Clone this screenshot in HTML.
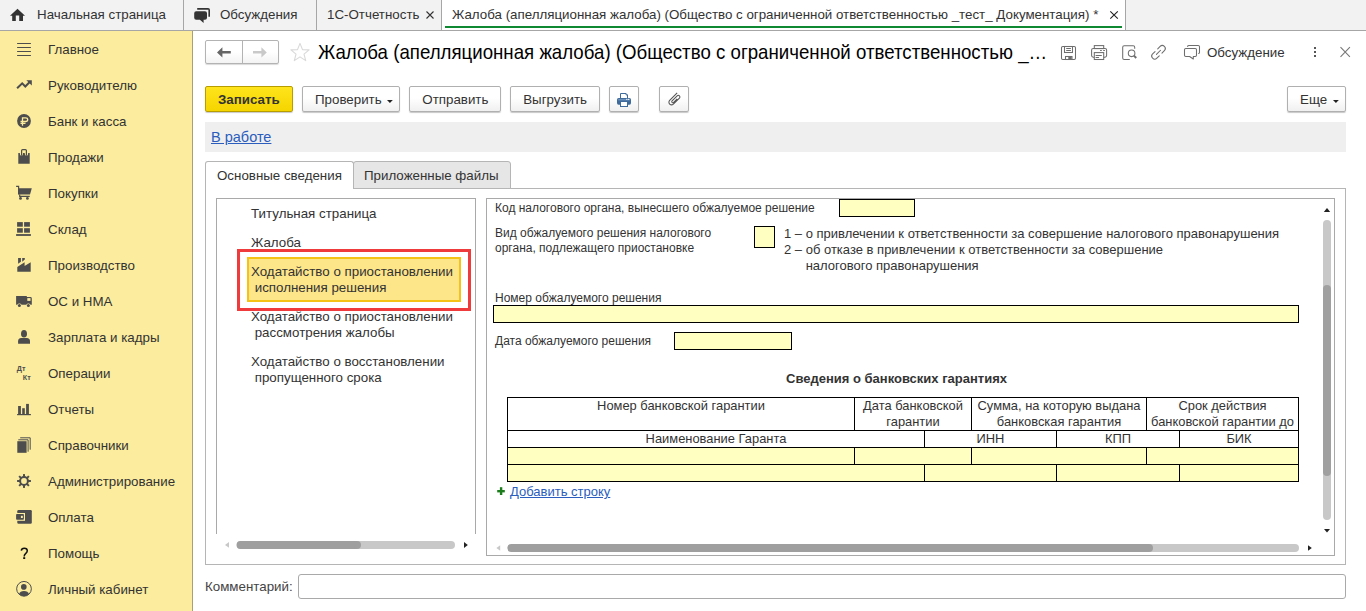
<!DOCTYPE html>
<html><head><meta charset="utf-8">
<style>
*{box-sizing:border-box;margin:0;padding:0}
html,body{width:1366px;height:611px;overflow:hidden;background:#fff;font-family:"Liberation Sans",sans-serif;color:#333;font-size:13px}
.a{position:absolute;white-space:nowrap}
svg{position:absolute;overflow:visible}
#tabs{position:absolute;left:0;top:0;width:1366px;height:31px;background:#f2f2f2;border-bottom:1px solid #a6a6a6}
.sep{position:absolute;top:0;width:1px;height:30px;background:#a6a6a6}
.tt{position:absolute;top:7px;font-size:13.33px;color:#333;line-height:15px;white-space:nowrap}
#side{position:absolute;left:0;top:31px;width:193px;height:580px;background:#fbec9e;border-right:1px solid #a89f72}
.si{position:absolute;left:48px;font-size:13.33px;color:#333;line-height:15px;white-space:nowrap}
.btn{position:absolute;top:86px;height:26px;border:1px solid #b0b0b0;border-radius:2px;background:linear-gradient(#fff 0%,#fff 45%,#f0f0f0 100%);box-shadow:0 1px 1px rgba(0,0,0,.22);font-size:13.33px;line-height:24px;padding-top:1px;color:#333;white-space:nowrap}
.fl{position:absolute;font-size:12px;line-height:15px;color:#333;white-space:nowrap}
.fi{position:absolute;background:#ffffc2;border:1px solid #000}
.lp{position:absolute;left:251px;font-size:13.33px;line-height:16px;color:#333;white-space:nowrap}
.th{position:absolute;font-size:12.9px;line-height:16px;color:#333;text-align:center;white-space:nowrap}
.vl{position:absolute;width:1px;background:#000}
.hl{position:absolute;height:1px;background:#000}
</style></head><body>

<div id="tabs">
  <div class="sep" style="left:183px"></div>
  <div class="sep" style="left:316px"></div>
  <div class="sep" style="left:441px"></div>
  <div style="position:absolute;left:442px;top:0;width:683px;height:30px;background:#fff"></div>
  <div style="position:absolute;left:445px;top:26px;width:677px;height:2px;background:#0f8a33"></div>
  <div class="sep" style="left:1125px"></div>
  <svg style="left:0;top:0" width="40" height="30"><path d="M17.5 8.8 L10 15.8 H12.2 V21 H15.8 V15.6 H19.2 V21 H23 V15.8 H25 Z" fill="#333"/></svg>
  <div class="tt" style="left:37px">Начальная страница</div>
  <svg style="left:188px;top:0" width="30" height="30"><path d="M9.2 8 H20 Q22 8 22 10 V16.7 H20.4 V9.8 H9.2 Z" fill="#333"/><path d="M8.2 11.2 H17 Q19 11.2 19 13.2 V17.8 Q19 19.8 17 19.8 H15.6 V23.1 L11.9 19.8 H8.2 Q6.2 19.8 6.2 17.8 V13.2 Q6.2 11.2 8.2 11.2 Z" fill="#333"/></svg>
  <div class="tt" style="left:220px">Обсуждения</div>
  <div class="tt" style="left:327px">1С-Отчетность</div>
  <svg style="left:425px;top:0" width="14" height="30"><path d="M1.5 11.5 L8.5 18.5 M8.5 11.5 L1.5 18.5" stroke="#333" stroke-width="1.1"/></svg>
  <div class="tt" style="left:452px">Жалоба (апелляционная жалоба) (Общество с ограниченной ответственностью _тест_ Документация) *</div>
  <svg style="left:1106px;top:0" width="14" height="30"><path d="M4.3 11.3 L11.8 18.6 M11.8 11.3 L4.3 18.6" stroke="#222" stroke-width="1.15"/></svg>
</div>

<div id="side">
  <svg style="left:0;top:0" width="192" height="580">
    <g fill="#4d4d4d">
      <rect x="17.1" y="12" width="13.8" height="1"/><rect x="17.1" y="16" width="13.8" height="1"/><rect x="17.1" y="20" width="13.8" height="1"/><rect x="17.1" y="24" width="13.8" height="1"/>
      <path d="M26.4 49.2 H31.8 V54.5 Z"/>
      <circle cx="24" cy="90" r="6.9"/>
      <path d="M18.3 122.1 H19.9 V123 Q19.9 124.8 21.45 124.8 Q23 124.8 23 123 V122.1 H24.8 V123 Q24.8 124.8 26.45 124.8 Q28.1 124.8 28.1 123 V122.1 H29.7 V132.7 H18.3 Z"/>
      <path d="M18.6 157.2 H31.8 L30 163.5 H18.6 Z"/>
      <circle cx="20.5" cy="167.4" r="1.4"/><circle cx="27.4" cy="167.4" r="1.4"/>
      <rect x="17.1" y="191.1" width="5.7" height="4.6"/><rect x="24.1" y="191.1" width="5.8" height="4.6"/><rect x="17.1" y="197.2" width="5.7" height="4.5"/><rect x="24.1" y="197.2" width="5.8" height="4.5"/><rect x="16.1" y="203.1" width="14.8" height="1.8"/>
      <path d="M17.3 236.1 L24.6 231.2 V235.1 L30.7 231.2 V240.7 H17.3 Z M18.1 227.1 H20.9 V230.7 L18.1 232.8 Z M22.2 227.1 H24.8 V228.6 L22.2 230.7 Z"/>
      <path d="M16.1 265.1 H26.8 V266.1 H30.4 Q31.8 266.1 31.8 267.5 V273.7 H30.6 A2.7 2.7 0 0 0 26.2 273.7 H21.6 A2.7 2.7 0 0 0 17.2 273.7 H16.1 Z"/>
      <circle cx="19.4" cy="274.4" r="1.5"/><circle cx="28.4" cy="274.4" r="1.5"/>
      <ellipse cx="24" cy="302.7" rx="3" ry="3.8"/>
      <path d="M18.1 312.7 V310.3 Q18.1 307.3 21.2 307.1 H26.8 Q30 307.3 30 310.3 V312.7 Z"/>
      <rect x="18.1" y="375" width="2.8" height="8.2"/><rect x="22.2" y="377.2" width="2.6" height="6"/><rect x="26.1" y="372.9" width="2.8" height="10.3"/><rect x="17.1" y="383" width="13.8" height="1.2"/>
      <rect x="17.3" y="410.2" width="9.3" height="11.6"/>
      <rect x="17.3" y="479.1" width="14.5" height="13.6" rx="1.2"/>
    </g>
    <path d="M16.1 155.3 H18.6 V163.5 M19.7 163.5 V165.4 H29.7" fill="none" stroke="#4d4d4d" stroke-width="1.2"/>
    <path d="M21.6 124.8 V119.6 Q21.6 118.6 22.6 118.6 H25.4 Q26.4 118.6 26.4 119.6 V124.8" fill="none" stroke="#4d4d4d" stroke-width="1.2"/>
    <path d="M17.1 57.3 L22.2 52.3 L25.3 55.5 L29.7 51" fill="none" stroke="#4d4d4d" stroke-width="2"/>
    <path d="M22.5 94.7 V86.9 H25.6 Q27.7 86.9 27.7 88.7 Q27.7 90.5 25.6 90.5 H20.5 M20.5 92.4 H25.5" fill="none" stroke="#fbec9e" stroke-width="1.3"/>
    <rect x="27.3" y="267.1" width="3.2" height="2.8" fill="#fbec9e"/>
    <path d="M18.3 408.8 H28.1 V420.7 M20.2 406.8 H30.2 V418.7" fill="none" stroke="#4d4d4d" stroke-width="1"/>
    <rect x="15" y="482" width="10" height="7.8" fill="#fbec9e"/>
    <rect x="16.1" y="483" width="7.8" height="5.8" rx="0.8" fill="#4d4d4d"/>
    <rect x="20.9" y="484.8" width="1.9" height="2.2" fill="#fbec9e"/>
    <text x="16.8" y="340" font-family="Liberation Sans" font-size="7.2" font-weight="bold" fill="#4d4d4d">Дт</text>
    <text x="22.8" y="349" font-family="Liberation Sans" font-size="7.2" font-weight="bold" fill="#4d4d4d">Кт</text>
    <g transform="translate(24 450)"><circle r="3.9" fill="none" stroke="#4d4d4d" stroke-width="2"/><g fill="#4d4d4d"><rect x="-1" y="-6.9" width="2" height="13.8"/><rect x="-1" y="-6.9" width="2" height="13.8" transform="rotate(45)"/><rect x="-1" y="-6.9" width="2" height="13.8" transform="rotate(90)"/><rect x="-1" y="-6.9" width="2" height="13.8" transform="rotate(135)"/></g><circle r="2.9" fill="#fbec9e"/></g>
    <path d="M21.3 519.6 Q21.5 517.2 24.3 517.2 Q27.3 517.2 27.3 519.8 Q27.3 521.3 25.6 522.6 Q24.2 523.8 24.2 525.4" fill="none" stroke="#111" stroke-width="1.5"/>
    <rect x="23.2" y="526.2" width="2" height="1.8" fill="#111"/>
    <g transform="translate(24 557.8)"><circle r="7.35" fill="none" stroke="#4d4d4d" stroke-width="1"/><circle cx="-0.2" cy="-1.9" r="2.8" fill="#4d4d4d"/><path d="M-5 5.2 Q-4 2.3 0 2.3 Q4 2.3 5 5.2 Q3 7.4 0 7.4 Q-3 7.4 -5 5.2 Z" fill="#4d4d4d"/></g>
  </svg>
  <div class="si" style="top:11px">Главное</div>
  <div class="si" style="top:47px">Руководителю</div>
  <div class="si" style="top:83px">Банк и касса</div>
  <div class="si" style="top:119px">Продажи</div>
  <div class="si" style="top:155px">Покупки</div>
  <div class="si" style="top:191px">Склад</div>
  <div class="si" style="top:227px">Производство</div>
  <div class="si" style="top:263px">ОС и НМА</div>
  <div class="si" style="top:299px">Зарплата и кадры</div>
  <div class="si" style="top:335px">Операции</div>
  <div class="si" style="top:371px">Отчеты</div>
  <div class="si" style="top:407px">Справочники</div>
  <div class="si" style="top:443px">Администрирование</div>
  <div class="si" style="top:479px">Оплата</div>
  <div class="si" style="top:515px">Помощь</div>
  <div class="si" style="top:551px">Личный кабинет</div>
</div>

<!-- header -->
<div style="position:absolute;left:205px;top:40px;width:74px;height:24px;border:1px solid #b3b3b3;border-radius:2px;background:linear-gradient(#fff 50%,#f3f3f3);box-shadow:0 1px 1px rgba(0,0,0,.15)"></div>
<div style="position:absolute;left:242px;top:41px;width:1px;height:22px;background:#b3b3b3"></div>
<svg style="left:205px;top:40px" width="74" height="24"><path d="M12 12.4 L17.4 7.2 V11.1 H25.8 V13.6 H17.4 V17.6 Z" fill="#666"/><path d="M61.8 12.4 L56.4 7.2 V11.1 H48 V13.6 H56.4 V17.6 Z" fill="#c9c9c9"/></svg>
<svg style="left:290px;top:42px" width="20" height="20"><path d="M10 1.4 L12.5 7.6 L19.1 7.9 L14 12.1 L15.7 18.6 L10 14.9 L4.3 18.6 L6 12.1 L0.9 7.9 L7.5 7.6 Z" fill="none" stroke="#d9d9d9" stroke-width="1.1" stroke-linejoin="round"/></svg>
<div class="a" style="left:318px;top:40.8px;font-size:18.65px;line-height:22px;color:#000;letter-spacing:0.018px;transform:scaleY(1.075);transform-origin:0 0">Жалоба (апелляционная жалоба) (Общество с ограниченной ответственностью _…</div>

<svg style="left:1055px;top:40px" width="300" height="26" fill="none" stroke="#6e6e6e" stroke-width="1.05">
  <rect x="6.5" y="6.5" width="14" height="13" rx="1.3"/>
  <rect x="9.5" y="6.5" width="8" height="6"/>
  <path d="M11.2 8.5 H15.9 M11.2 10.5 H15.9"/>
  <rect x="10.5" y="16.5" width="6.5" height="3"/>
  <rect x="13.3" y="16.5" width="3.4" height="3" fill="#6e6e6e" stroke="none"/>
  <rect x="39.3" y="5.6" width="9.4" height="3"/>
  <rect x="36.6" y="8.4" width="15" height="8.8" rx="1.6"/>
  <rect x="39.3" y="12.6" width="9.4" height="6.9" fill="#fff"/>
  <path d="M41 15.4 H46.4 M41 17.5 H43.6 M45.5 10.5 H46.4 M48.6 10.5 H49.5" stroke-linecap="round"/>
  <path d="M74.8 19.5 H69.2 Q67.7 19.5 67.7 18 V7.3 Q67.7 5.8 69.2 5.8 H78.2 Q79.7 5.8 79.7 7.3 V8.8"/>
  <circle cx="76.6" cy="13.3" r="3.3"/>
  <path d="M78.9 15.6 L81.2 18" stroke-width="2"/>
  <path transform="translate(103.5 12.3) rotate(-45)" d="M1.9 -3 H5.3 A3 3 0 0 1 5.3 3 H1.9 M-1.9 3 H-5.3 A3 3 0 0 1 -5.3 -3 H-1.9 M-2.9 0 H2.9" stroke-linecap="round"/>
  <path d="M130.8 8.5 H140.2 Q141.5 8.5 141.5 9.8 V15.2 Q141.5 16.5 140.2 16.5 H138.3 V19 L134.6 16.5 H130.8 Q129.5 16.5 129.5 15.2 V9.8 Q129.5 8.5 130.8 8.5 Z" stroke-linejoin="round"/>
  <path d="M132.6 6.4 Q132.8 5.5 133.8 5.5 H143.2 Q144.5 5.5 144.5 6.8 V12.4 Q144.5 13.2 143.6 13.4" stroke-linecap="round"/>
  <path d="M285.5 7.2 L294.9 16.8 M294.9 7.2 L285.5 16.8" stroke="#777" stroke-width="1.1"/>
</svg>
<div class="a" style="left:1207px;top:45px;font-size:13.33px;line-height:15px;color:#333">Обсуждение</div>
<svg style="left:1312px;top:44px" width="6" height="16"><rect x="2" y="3" width="2" height="2" fill="#555"/><rect x="2" y="7" width="2" height="2" fill="#555"/><rect x="2" y="11" width="2" height="2" fill="#555"/></svg>

<!-- toolbar -->
<div class="btn" style="left:205px;width:88px;background:linear-gradient(#ffe41c,#f5d500);border-color:#b89d00;font-weight:bold;padding-left:12px">Записать</div>
<div class="btn" style="left:302px;width:98px;padding-left:12px">Проверить</div>
<svg style="left:386px;top:100px" width="8" height="4"><path d="M1 0.1 H6.8 L3.9 3 Z" fill="#222"/></svg>
<div class="btn" style="left:409px;width:92px;padding-left:12.3px">Отправить</div>
<div class="btn" style="left:510px;width:90px;padding-left:12.2px">Выгрузить</div>
<div class="btn" style="left:609px;width:30px"></div>
<svg style="left:609px;top:86px" width="30" height="26"><path d="M11.5 12 V7.5 H17 L18.5 9 V12" fill="#fff" stroke="#3f6b9c" stroke-width="1"/><path d="M17 7.5 V9 H18.5" fill="none" stroke="#3f6b9c" stroke-width="0.8"/><rect x="8" y="12" width="14" height="6.7" rx="1.6" fill="#3f6b9c"/><rect x="9.2" y="13.3" width="11.6" height="1" fill="#7d9fc6"/><rect x="11.5" y="15.5" width="7" height="5" fill="#fff" stroke="#3f6b9c" stroke-width="1"/><rect x="19" y="12.8" width="1.3" height="1" fill="#fff"/><rect x="17.2" y="12.8" width="1.3" height="1" fill="#fff"/></svg>
<div class="btn" style="left:659px;width:30px"></div>
<svg style="left:659px;top:86px" width="30" height="26"><path transform="translate(15.2 13.6) rotate(-45)" d="M6.8 -2.6 H-3.8 A2.6 2.6 0 0 0 -3.8 2.6 H4.8 A1.6 1.6 0 0 0 4.8 -0.6 H-2.4 A1.1 1.1 0 0 0 -2.4 1.6 H2.6" fill="none" stroke="#555" stroke-width="1.05"/></svg>
<div class="btn" style="left:1287px;width:59px;padding-left:12px">Еще</div>
<svg style="left:1332px;top:100px" width="8" height="4"><path d="M1 0.1 H6.8 L3.9 3 Z" fill="#222"/></svg>

<!-- status -->
<div style="position:absolute;left:205px;top:122px;width:1141px;height:30px;background:#efefef"></div>
<div class="a" style="left:211px;top:129px;font-size:14.5px;line-height:17px;color:#2a5dbd;text-decoration:underline">В работе</div>

<!-- page tabs -->
<div style="position:absolute;left:205px;top:188px;width:1141px;height:377px;border:1px solid #b5b5b5"></div>
<div style="position:absolute;left:353px;top:161px;width:158px;height:28px;background:#e6e6e6;border:1px solid #b5b5b5;border-radius:3px 3px 0 0"></div>
<div style="position:absolute;left:205px;top:161px;width:149px;height:28px;background:#fff;border:1px solid #b5b5b5;border-bottom:none;border-radius:3px 3px 0 0"></div>
<div class="a" style="left:217px;top:168px;font-size:13.33px;line-height:15px;color:#333">Основные сведения</div>
<div class="a" style="left:364px;top:168px;font-size:13.33px;line-height:15px;color:#333">Приложенные файлы</div>

<!-- left panel -->
<div style="position:absolute;left:216px;top:198px;width:260px;height:336px;border:1px solid #a9a9a9;border-bottom:none"></div>
<div class="lp" style="top:206px">Титульная страница</div>
<div class="lp" style="top:235px">Жалоба</div>
<div style="position:absolute;left:237px;top:249px;width:234px;height:62px;border:3px solid #ef3b3b"></div>
<div style="position:absolute;left:247px;top:257px;width:214px;height:45px;background:#fde58a;border:2px solid #f5c216"></div>
<div class="lp" style="top:264px">Ходатайство о приостановлении<br>&nbsp;исполнения решения</div>
<div class="lp" style="top:309px">Ходатайство о приостановлении<br>&nbsp;рассмотрения жалобы</div>
<div class="lp" style="top:354px">Ходатайство о восстановлении<br>&nbsp;пропущенного срока</div>
<svg style="left:216px;top:534px" width="260" height="22"><path d="M9 11 L13 8 V13.8 Z" fill="#c8c8c8"/><rect x="20.6" y="7" width="218.4" height="8" rx="4" fill="#c8c8c8"/><rect x="20.6" y="7" width="124.4" height="8" rx="4" fill="#9f9f9f"/><path d="M248 8 L251.8 11 L248 13.9 Z" fill="#222"/></svg>

<!-- right panel -->
<div style="position:absolute;left:486px;top:198px;width:849px;height:358px;border:1px solid #a9a9a9"></div>
<svg style="left:1318px;top:199px" width="16" height="356"><path d="M9 9 L12.2 13 H5.8 Z" fill="#222"/><rect x="5" y="21" width="8" height="300" rx="4" fill="#c8c8c8"/><rect x="5" y="86" width="8" height="191" rx="4" fill="#a0a0a0"/><path d="M6 330 H12 L9 333.6 Z" fill="#222"/></svg>
<svg style="left:487px;top:537px" width="830" height="18"><path d="M9.4 11 L13.2 8.2 V13.8 Z" fill="#c8c8c8"/><rect x="20.5" y="7" width="791.5" height="8" rx="4" fill="#c8c8c8"/><rect x="20.5" y="7" width="645.5" height="8" rx="4" fill="#9f9f9f"/><path d="M821 8.2 L824.8 11 L821 13.8 Z" fill="#222"/></svg>

<div class="fl" style="left:495px;top:201px">Код налогового органа, вынесшего обжалуемое решение</div>
<div class="fi" style="left:839px;top:199px;width:76px;height:18px"></div>
<div class="fl" style="left:495px;top:226px">Вид обжалуемого решения налогового<br>органа, подлежащего приостановке</div>
<div class="fi" style="left:754px;top:226px;width:21px;height:22px"></div>
<div class="a" style="left:784px;top:226px;font-size:13px;line-height:16px;color:#333">1 – о привлечении к ответственности за совершение налогового правонарушения<br>2 – об отказе в привлечении к ответственности за совершение<br>&nbsp; &nbsp; &nbsp; налогового правонарушения</div>
<div class="fl" style="left:495px;top:291px">Номер обжалуемого решения</div>
<div class="fi" style="left:493px;top:305px;width:806px;height:18px"></div>
<div class="fl" style="left:495px;top:334px">Дата обжалуемого решения</div>
<div class="fi" style="left:674px;top:332px;width:118px;height:18px"></div>

<div class="a" style="left:786px;top:371px;font-size:13px;line-height:15px;font-weight:bold;color:#333">Сведения о банковских гарантиях</div>

<!-- table -->
<div style="position:absolute;left:507px;top:448px;width:792px;height:34px;background:#ffffc2"></div>
<div class="hl" style="left:507px;top:397px;width:792px"></div>
<div class="hl" style="left:507px;top:430px;width:792px"></div>
<div class="hl" style="left:507px;top:447px;width:792px"></div>
<div class="hl" style="left:507px;top:464px;width:792px"></div>
<div class="hl" style="left:507px;top:481px;width:792px"></div>
<div class="vl" style="left:507px;top:397px;height:85px"></div>
<div class="vl" style="left:1298px;top:397px;height:85px"></div>
<div class="vl" style="left:854px;top:397px;height:34px"></div>
<div class="vl" style="left:971px;top:397px;height:34px"></div>
<div class="vl" style="left:1146px;top:397px;height:34px"></div>
<div class="vl" style="left:854px;top:447px;height:18px"></div>
<div class="vl" style="left:971px;top:447px;height:18px"></div>
<div class="vl" style="left:1146px;top:447px;height:18px"></div>
<div class="vl" style="left:924px;top:430px;height:18px"></div>
<div class="vl" style="left:1056px;top:430px;height:18px"></div>
<div class="vl" style="left:1179px;top:430px;height:18px"></div>
<div class="vl" style="left:924px;top:464px;height:18px"></div>
<div class="vl" style="left:1056px;top:464px;height:18px"></div>
<div class="vl" style="left:1179px;top:464px;height:18px"></div>
<div class="th" style="left:508px;top:398px;width:346px">Номер банковской гарантии</div>
<div class="th" style="left:855px;top:398px;width:116px">Дата банковской<br>гарантии</div>
<div class="th" style="left:972px;top:398px;width:174px">Сумма, на которую выдана<br>банковская гарантия</div>
<div class="th" style="left:1147px;top:398px;width:151px">Срок действия<br>банковской гарантии до</div>
<div class="th" style="left:508px;top:431px;width:416px">Наименование Гаранта</div>
<div class="th" style="left:925px;top:431px;width:131px">ИНН</div>
<div class="th" style="left:1057px;top:431px;width:122px">КПП</div>
<div class="th" style="left:1180px;top:431px;width:118px">БИК</div>

<svg style="left:0;top:0" width="1" height="1"><rect x="497.2" y="490" width="7.6" height="2.4" fill="#1b7d1b"/><rect x="499.9" y="487.2" width="2.4" height="7.8" fill="#1b7d1b"/></svg>
<div class="a" style="left:510px;top:484px;font-size:13px;line-height:15px;color:#2a5dbd;text-decoration:underline">Добавить строку</div>

<!-- comment -->
<div class="a" style="left:205px;top:579px;font-size:13.33px;line-height:15px;color:#444">Комментарий:</div>
<div style="position:absolute;left:298px;top:574px;width:1048px;height:25px;border:1px solid #a9a9a9;border-radius:3px"></div>

</body></html>
